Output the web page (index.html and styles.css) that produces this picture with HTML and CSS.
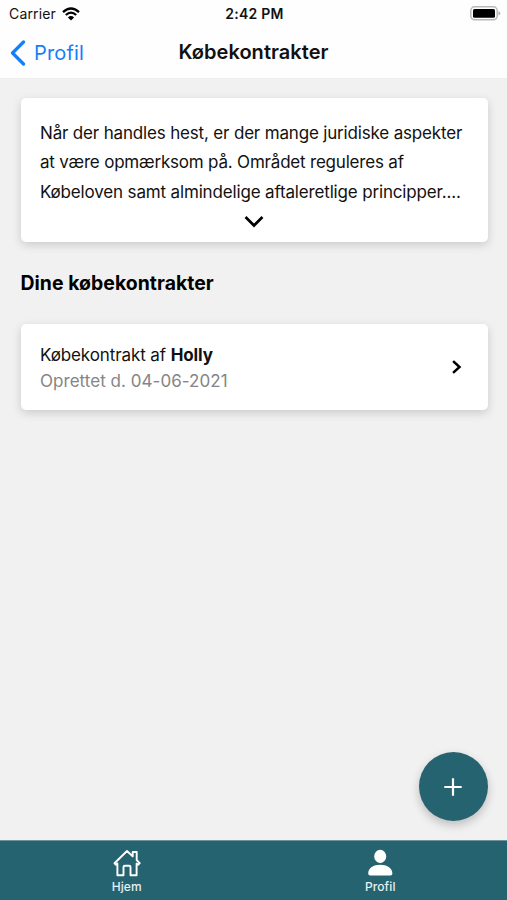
FILE: index.html
```html
<!DOCTYPE html>
<html lang="da">
<head>
<meta charset="utf-8">
<meta name="viewport" content="width=device-width, initial-scale=1">
<title>Købekontrakter</title>
<link rel="stylesheet" href="styles.css">
</head>
<body>
<div class="app">
  <header class="header">
    <div class="status">
      <div class="carrier"><span>Carrier</span>
        <svg class="wifi" viewBox="0 0 18 14" width="18" height="14"><path d="M1 5.2Q9-2.1 17 5.2M3.8 8Q9 3.2 14.2 8" fill="none" stroke="#000" stroke-width="2.3"/><path d="M5.9 10.4Q9 7.8 12.1 10.4L9 13.5Z"/></svg>
      </div>
      <span class="time">2:42 PM</span>
      <svg class="battery" viewBox="0 0 31 15" width="31" height="15"><rect x=".8" y=".8" width="26.4" height="13" rx="3.8" fill="#fff" stroke="#b9b9b9" stroke-width="1.5"/><rect x="3" y="3" width="22" height="8.8" rx="1.5"/><path d="M28.5 5Q32 7.3 28.5 9.6Z" fill="#aaa"/></svg>
    </div>
    <nav class="navbar">
      <a class="back"><svg viewBox="0 0 16 26" width="16" height="26"><path d="M13.5 2 2.5 13l11 11" fill="none" stroke="#147efb" stroke-width="3.2" stroke-linecap="round" stroke-linejoin="round"/></svg><span>Profil</span></a>
      <h1 class="title">Købekontrakter</h1>
    </nav>
  </header>
  <main class="content">
    <section class="card intro">
      <p class="line l1">Når der handles hest, er der mange juridiske aspekter</p>
      <p class="line l2">at være opmærksom på. Området reguleres af</p>
      <p class="line l3">Købeloven samt almindelige aftaleretlige principper....</p>
      <svg class="chevron-down" viewBox="0 0 20 12" width="20" height="12"><path d="m2.5 2 7.5 7.5L17.500 2" fill="none" stroke="#000" stroke-width="2.7" stroke-linecap="square"/></svg>
    </section>
    <h2 class="heading">Dine købekontrakter</h2>
    <section class="card contract">
      <div>
        <p class="name">Købekontrakt af <b>Holly</b></p>
        <p class="date">Oprettet d. 04-06-2021</p>
      </div>
      <svg class="chevron-right" viewBox="0 0 10 14" width="10" height="14"><path d="m2 2 5.5 5L2 12" fill="none" stroke="#000" stroke-width="2.5" stroke-linecap="square"/></svg>
    </section>
    <button class="fab" aria-label="Tilføj"><svg viewBox="0 0 18 18" width="18" height="18"><path d="M9 .3v17.4M.3 9h17.4" stroke="#fff" stroke-width="2.2"/></svg></button>
  </main>
  <footer class="tabs">
    <a class="tab"><svg viewBox="0 0 28 28" width="28" height="28"><path d="M1.5 14.2 14 2l5.7 5.4V3h4v8.2l3 3-1.4 1.5-1.7-1.2v11.8h-6.1v-8.2q0-1.4-1.4-1.4h-4.2q-1.4 0-1.4 1.4v8.2H4.4V14.5l-1.7 1.2Z" fill="none" stroke="#fff" stroke-width="1.9" stroke-linejoin="round"/></svg><span>Hjem</span></a>
    <a class="tab"><svg viewBox="0 0 28 28" width="28" height="28"><ellipse cx="14.2" cy="7.4" rx="6" ry="6.6" fill="#fff"/><path d="M2.2 24.5C2.2 18.8 7.7 15.8 14.2 15.8s12.2 3 12.2 8.7q0 2-2 2H4.2q-2 0-2-2Z" fill="#fff"/></svg><span>Profil</span></a>
  </footer>
</div>
</body>
</html>
```
FILE: styles.css
```css
* { box-sizing: border-box; }
body { margin: 0; font-family: Inter, "Liberation Sans", sans-serif; color: #111; background: #f1f1f1; }
h1, h2, p { margin: 0; }
svg { display: block; flex: none; }
.app { height: 900px; display: flex; flex-direction: column; overflow: hidden; }
.header { height: 79px; background: #fefefe; border-bottom: 1px solid #eee; }
.status { height: 27px; display: grid; grid-template-columns: 1fr auto 1fr; align-items: center; padding: 0 6px 0 9px; }
.carrier { display: flex; align-items: center; gap: 6px; font-size: 14px; letter-spacing: .15px; }
.time { font-size: 14px; font-weight: 600; letter-spacing: .25px; margin-left: -1px; }
.battery { justify-self: end; }
.navbar { height: 51px; display: grid; grid-template-columns: 1fr auto 1fr; align-items: center; padding: 0 10px; }
.back { display: flex; align-items: center; gap: 8px; color: #147efb; font-size: 20px; letter-spacing: .15px; }
.title { font-size: 20px; line-height: 25px; font-weight: 600; letter-spacing: .05px; }
.content { flex: 1; padding: 19px 19.5px 0 20.5px; position: relative; }
.card { background: #fff; border-radius: 5px; box-shadow: 0 3px 10px rgba(0, 0, 0, .16); }
.intro { height: 144px; padding: 21px 20px 0 19.5px; }
.line { font-size: 17px; line-height: 29.4px; white-space: nowrap; }
.l1 { letter-spacing: -.17px; }
.l2 { letter-spacing: -.2px; }
.l3 { letter-spacing: -.16px; }
.chevron-down { margin: 9px auto 0; }
.heading { margin: 26px 0; height: 30px; font-size: 19.4px; line-height: 30px; font-weight: 700; letter-spacing: .05px; color: #000; white-space: nowrap; }
.contract { height: 86px; padding: 1px 26px 0 19.5px; display: flex; align-items: center; justify-content: space-between; }
.name, .date { font-size: 17px; line-height: 26px; white-space: nowrap; }
.name { letter-spacing: -.1px; }
.date { color: #858585; letter-spacing: .04px; }
.chevron-right { margin-top: -1px; }
.fab { position: absolute; right: 19.5px; bottom: 19px; width: 69px; height: 69px; border: 0; border-radius: 50%; padding: 0; display: grid; place-items: center; background: #266370; box-shadow: 0 4px 10px rgba(0, 0, 0, .22); }
.tabs { height: 60px; background: #266370; border-top: 1px solid #6d949d; display: flex; }
.tab { flex: 1; display: flex; flex-direction: column; align-items: center; padding-top: 8px; color: #e5f1f3; font-size: 12px; line-height: 17px; font-weight: 500; letter-spacing: .1px; }
.tab span { margin-top: 1px; }
```
